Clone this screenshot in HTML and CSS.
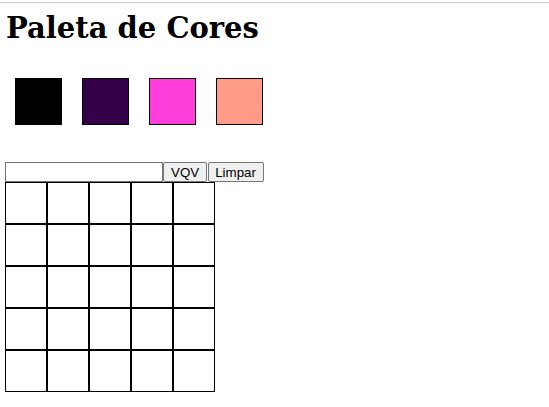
FILE: index.html
```html
<!DOCTYPE html>
<html lang="pt-BR">
<head>
<meta charset="utf-8">
<title>Paleta de Cores</title>
<link rel="stylesheet" href="styles.css">
</head>
<body>
<div class="topline"></div>
<main class="page">
  <h1 class="title">Paleta de Cores</h1>
  <div class="palette">
    <div class="color c-black"></div>
    <div class="color c-purple"></div>
    <div class="color c-pink"></div>
    <div class="color c-salmon"></div>
  </div>
  <div class="controls">
    <input class="board-size" type="text"><button class="btn btn-vqv">VQV</button><button class="btn btn-clear">Limpar</button>
  </div>
  <div class="board">
    <div class="pixel"></div><div class="pixel"></div><div class="pixel"></div><div class="pixel"></div><div class="pixel"></div>
    <div class="pixel"></div><div class="pixel"></div><div class="pixel"></div><div class="pixel"></div><div class="pixel"></div>
    <div class="pixel"></div><div class="pixel"></div><div class="pixel"></div><div class="pixel"></div><div class="pixel"></div>
    <div class="pixel"></div><div class="pixel"></div><div class="pixel"></div><div class="pixel"></div><div class="pixel"></div>
    <div class="pixel"></div><div class="pixel"></div><div class="pixel"></div><div class="pixel"></div><div class="pixel"></div>
  </div>
</main>
</body>
</html>
```
FILE: styles.css
```css
html, body {
  margin: 0;
  padding: 0;
  background: #fff;
}

.topline {
  height: 1px;
  margin-top: 2px;
  background: #cccccc;
}

.page {
  padding: 0 5px;
}

.title {
  font-family: "DejaVu Serif", Georgia, serif;
  font-weight: bold;
  font-size: 29px;
  line-height: 36px;
  margin: 7px 0 0 1px;
  color: #000;
}

.palette {
  display: flex;
  gap: 20px;
  padding-left: 10px;
  margin-top: 32px;
}

.color {
  width: 45px;
  height: 45px;
  border: 1px solid #000;
}

.c-black { background: #000; }
.c-purple { background: #330049; }
.c-pink { background: #ff3ddb; }
.c-salmon { background: #ff9b86; }

.controls {
  display: flex;
  margin-top: 37px;
  font-family: "Liberation Sans", Arial, sans-serif;
}

.board-size {
  box-sizing: border-box;
  width: 158px;
  height: 20px;
  margin: 0;
  border: 1px solid #767676;
  padding: 1px 2px;
  font: 13.333px "Liberation Sans", Arial, sans-serif;
}

.btn {
  box-sizing: border-box;
  height: 20px;
  margin: 0 1px 0 0;
  padding: 0 6px;
  border: 1px solid #767676;
  border-radius: 2px;
  background: #efefef;
  color: #000;
  font: 13.333px "Liberation Sans", Arial, sans-serif;
}

.btn-vqv {
  padding: 0 7px;
}

.btn-clear {
  padding: 0 7px 0 6px;
}

.board {
  display: grid;
  grid-template-columns: repeat(5, 42px);
  grid-auto-rows: 42px;
  width: 210px;
}

.pixel {
  border: 1px solid #000;
  background: #fff;
}
```
